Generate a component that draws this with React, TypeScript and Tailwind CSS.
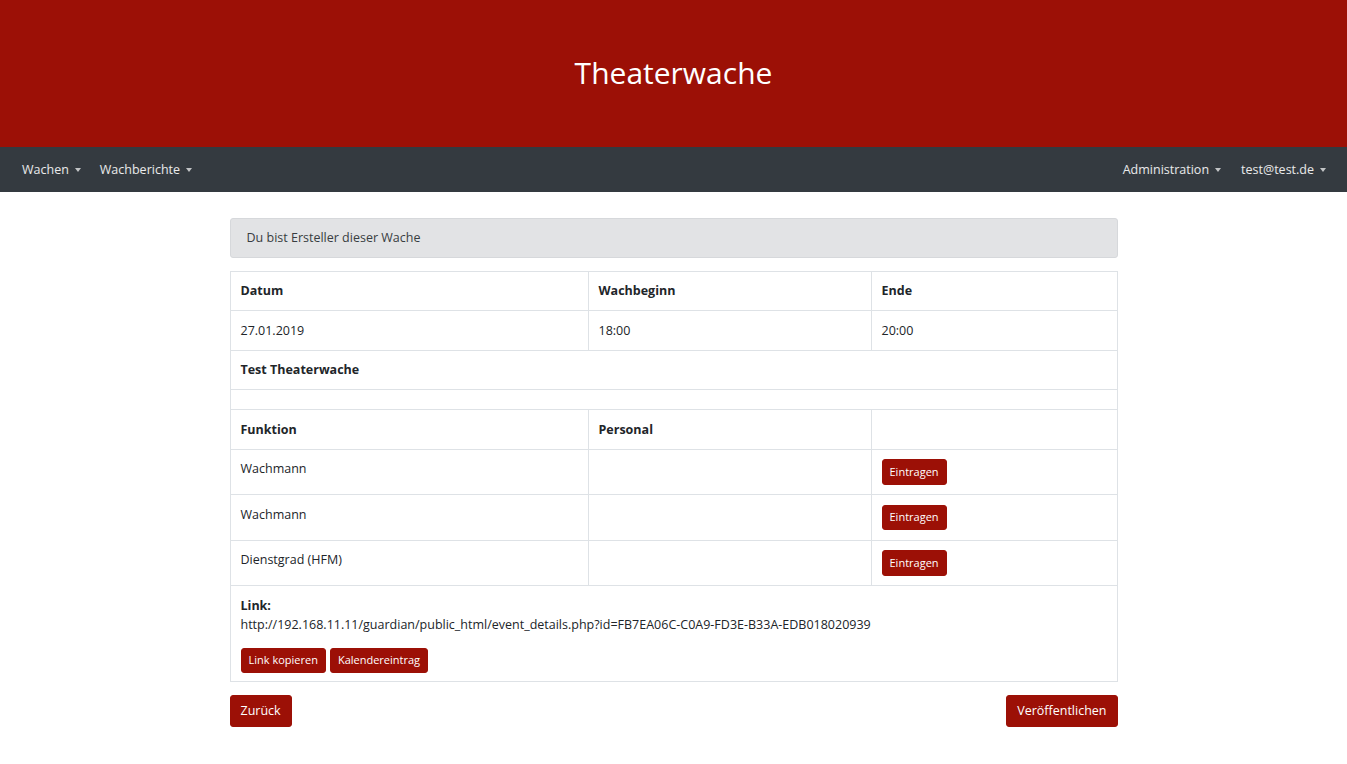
import React from "react";

const font = { fontFamily: '"Segoe UI", "Open Sans", "Noto Sans", sans-serif' };

function Caret() {
  return <span className="ml-[6px] inline-block h-0 w-0 border-x-[3.5px] border-t-[4px] border-x-transparent border-t-white/70 align-middle" />;
}

function NavItem({ label }: { label: string }) {
  return (
    <a className="flex items-center px-[7px] text-[12.5px] text-white/90 cursor-pointer">
      {label}
      <Caret />
    </a>
  );
}

function SmallButton({ label }: { label: string }) {
  return (
    <button className="rounded-[3px] border border-[#9c1006] bg-[#9c1006] px-[7px] py-[3.5px] text-[11px] leading-[16.5px] text-white">
      {label}
    </button>
  );
}

export default function App() {
  const rows = ["Wachmann", "Wachmann", "Dienstgrad (HFM)"];
  const cell = "border border-[#dee2e6] px-[10px] py-[9.5px] align-top";

  return (
    <div className="min-h-screen bg-white text-[12.5px] leading-[19.5px] text-[#212529]" style={font}>
      {/* Header */}
      <header className="flex h-[147px] items-center justify-center bg-[#9c1006]">
        <h1 className="mb-[2px] text-[30px] font-normal text-white">Theaterwache</h1>
      </header>

      {/* Navigation */}
      <nav className="flex h-[45px] items-center justify-between bg-[#343a40] pl-[15px] pr-[14px]">
        <div className="flex gap-[5px]">
          <NavItem label="Wachen" />
          <NavItem label="Wachberichte" />
        </div>
        <div className="flex gap-[6px]">
          <NavItem label="Administration" />
          <NavItem label="test@test.de" />
        </div>
      </nav>

      {/* Content */}
      <main className="mx-auto w-[888px] pt-[26px]">
        <div className="rounded-[3px] border border-[#d6d8db] bg-[#e2e3e5] px-[16px] py-[9px] text-[#383d41]">
          Du bist Ersteller dieser Wache
        </div>

        <table className="mt-[13px] w-full border-collapse">
          <colgroup>
            <col className="w-[358px]" />
            <col className="w-[283px]" />
            <col />
          </colgroup>
          <tbody>
            <tr className="font-bold">
              <td className={cell}>Datum</td>
              <td className={cell}>Wachbeginn</td>
              <td className={cell}>Ende</td>
            </tr>
            <tr>
              <td className={cell}>27.01.2019</td>
              <td className={cell}>18:00</td>
              <td className={cell}>20:00</td>
            </tr>
            <tr>
              <td className={cell + " font-bold"} colSpan={3}>
                Test Theaterwache
              </td>
            </tr>
            <tr>
              <td className={cell} colSpan={3}></td>
            </tr>
            <tr className="font-bold">
              <td className={cell}>Funktion</td>
              <td className={cell}>Personal</td>
              <td className={cell}></td>
            </tr>
            {rows.map((r, i) => (
              <tr key={i}>
                <td className={cell}>{r}</td>
                <td className={cell}></td>
                <td className={cell}>
                  <SmallButton label="Eintragen" />
                </td>
              </tr>
            ))}
            <tr>
              <td className="border border-[#dee2e6] px-[10px] pt-[9.5px] pb-[8px] align-top" colSpan={3}>
                <div className="font-bold">Link:</div>
                <div>http://192.168.11.11/guardian/public_html/event_details.php?id=FB7EA06C-C0A9-FD3E-B33A-EDB018020939</div>
                <div className="mt-[13px] flex gap-[4px]">
                  <SmallButton label="Link kopieren" />
                  <SmallButton label="Kalendereintrag" />
                </div>
              </td>
            </tr>
          </tbody>
        </table>

        <div className="mt-[13px] flex justify-between">
          <button className="rounded-[3px] border border-[#9c1006] bg-[#9c1006] px-[10px] py-[5px] text-[12.5px] leading-[19.5px] text-white">
            Zurück
          </button>
          <button className="rounded-[3px] border border-[#9c1006] bg-[#9c1006] px-[10px] py-[5px] text-[12.5px] leading-[19.5px] text-white">
            Veröffentlichen
          </button>
        </div>
      </main>
    </div>
  );
}
